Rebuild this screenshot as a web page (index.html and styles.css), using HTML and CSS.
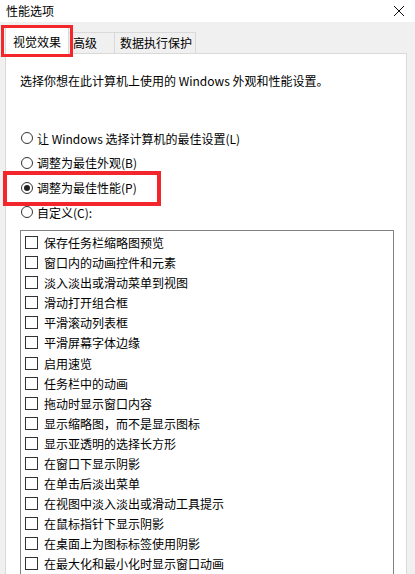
FILE: index.html
```html
<!DOCTYPE html>
<html lang="zh-CN">
<head>
<meta charset="utf-8">
<title>性能选项</title>
<link rel="stylesheet" href="styles.css">
</head>
<body>
<div class="window">
  <div class="titlebar">
    <span class="title">性能选项</span>
    <svg class="close" width="12" height="12" viewBox="0 0 12 12"><path d="M1 1L11 11M11 1L1 11" stroke="#111" stroke-width="1" fill="none"/></svg>
  </div>
  <div class="body">
    <div class="tabs">
      <div class="tab active">视觉效果</div>
      <div class="tab">高级</div>
      <div class="tab">数据执行保护</div>
      <div class="mark mark-tab"></div>
    </div>
    <div class="panel">
      <p class="desc">选择你想在此计算机上使用的 Windows 外观和性能设置。</p>
      <div class="radios">
        <div class="radio"><span class="circle"></span>让 Windows 选择计算机的最佳设置(L)</div>
        <div class="radio"><span class="circle"></span>调整为最佳外观(B)</div>
        <div class="radio checked"><span class="circle"></span>调整为最佳性能(P)<div class="mark mark-radio"></div></div>
        <div class="radio"><span class="circle"></span>自定义(C):</div>
      </div>
      <div class="listbox">
        <div class="item"><span class="box"></span>保存任务栏缩略图预览</div>
        <div class="item"><span class="box"></span>窗口内的动画控件和元素</div>
        <div class="item"><span class="box"></span>淡入淡出或滑动菜单到视图</div>
        <div class="item"><span class="box"></span>滑动打开组合框</div>
        <div class="item"><span class="box"></span>平滑滚动列表框</div>
        <div class="item"><span class="box"></span>平滑屏幕字体边缘</div>
        <div class="item"><span class="box"></span>启用速览</div>
        <div class="item"><span class="box"></span>任务栏中的动画</div>
        <div class="item"><span class="box"></span>拖动时显示窗口内容</div>
        <div class="item"><span class="box"></span>显示缩略图，而不是显示图标</div>
        <div class="item"><span class="box"></span>显示亚透明的选择长方形</div>
        <div class="item"><span class="box"></span>在窗口下显示阴影</div>
        <div class="item"><span class="box"></span>在单击后淡出菜单</div>
        <div class="item"><span class="box"></span>在视图中淡入淡出或滑动工具提示</div>
        <div class="item"><span class="box"></span>在鼠标指针下显示阴影</div>
        <div class="item"><span class="box"></span>在桌面上为图标标签使用阴影</div>
        <div class="item"><span class="box"></span>在最大化和最小化时显示窗口动画</div>
      </div>
    </div>
  </div>
</div>
</body>
</html>
```
FILE: styles.css
```css
html, body {
  margin: 0;
  padding: 0;
  width: 415px;
  height: 574px;
  overflow: hidden;
  background: #f0f0f0;
}
.window {
  font-family: "Noto Sans CJK SC", "Noto Sans", sans-serif;
  font-size: 12px;
  color: #000;
  display: flex;
  flex-direction: column;
  height: 574px;
}
.titlebar {
  height: 29px;
  background: #fff;
  display: flex;
  align-items: center;
  justify-content: space-between;
  padding: 0 10px 2px 6px;
  box-sizing: border-box;
}
.title {
  font-size: 12px;
  color: #000;
}
.close {
  display: block;
  margin-top: 1px;
}
.body {
  flex: 1;
  background: #f0f0f0;
  padding: 5px 8px 0 5px;
  display: flex;
  flex-direction: column;
}
.tabs {
  display: flex;
  align-items: flex-end;
  height: 26px;
  position: relative;
}
.tab {
  height: 21px;
  line-height: 20px;
  border: 1px solid #d9d9d9;
  border-bottom: none;
  background: #f0f0f0;
  box-sizing: border-box;
  white-space: nowrap;
}
.tab.active {
  height: 27px;
  line-height: 28px;
  background: #fff;
  margin-bottom: -1px;
  padding: 0 0 0 7px;
  position: relative;
  z-index: 1;
  width: 64px;
}
.tab:nth-child(2) { width: 47px; padding-left: 4px; margin-left: -1px; }
.tab:nth-child(3) { width: 82px; padding-left: 5px; margin-left: -1px; }
.mark {
  position: absolute;
  border: 3px solid #f2262b;
  box-sizing: border-box;
  z-index: 2;
  pointer-events: none;
}
.mark-tab {
  left: -4px;
  top: -2px;
  width: 72px;
  height: 32px;
}
.panel {
  flex: 1;
  background: #fff;
  border: 1px solid #d9d9d9;
  border-bottom: none;
  padding: 0 12px 0 14px;
}
.desc {
  margin: 17px 0 0 0;
  line-height: 20px;
}
.radios {
  margin-top: 35px;
  display: flex;
  flex-direction: column;
}
.radio {
  height: 24.6px;
  display: flex;
  align-items: center;
  gap: 4px;
  position: relative;
}
.circle {
  width: 12px;
  height: 12px;
  border: 1px solid #333;
  border-radius: 50%;
  box-sizing: border-box;
  margin-left: 1px;
  position: relative;
}
.checked .circle::after {
  content: "";
  position: absolute;
  left: 2px;
  top: 2px;
  width: 6px;
  height: 6px;
  border-radius: 50%;
  background: #222;
}
.mark-radio {
  border-width: 4px;
  left: -17px;
  top: -4px;
  width: 158px;
  height: 35px;
}
.listbox {
  margin-top: 6px;
  border: 1px solid #828282;
  border-bottom: none;
  width: 374px;
  box-sizing: border-box;
  padding: 1px 0 0 4px;
  flex: 1;
}
.item {
  height: 20.1px;
  display: flex;
  align-items: center;
  gap: 6px;
}
.box {
  width: 13px;
  height: 13px;
  border: 1px solid #333;
  box-sizing: border-box;
  background: #fff;
}
```
